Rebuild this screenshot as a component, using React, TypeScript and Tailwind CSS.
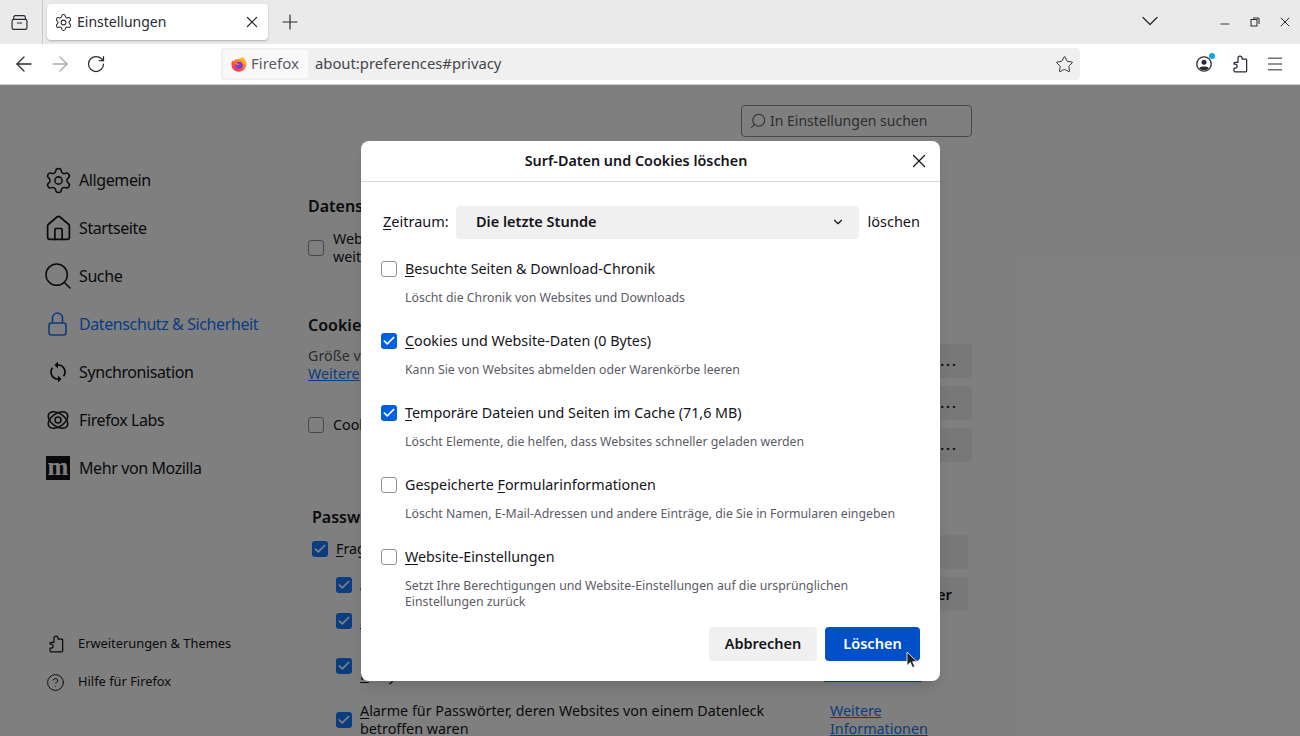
import React from 'react';
import { Settings, X, Plus, ArrowLeft, ArrowRight, RotateCw, Star, Menu, ChevronDown, Search, House, CircleHelp, Check, Minus } from 'lucide-react';

function Puzzle({ className }: { className?: string }) {
  return (
    <svg viewBox="0 0 16 16" fill="none" stroke="currentColor" strokeWidth="1.1" strokeLinejoin="round" className={className}>
      <path d="M6.200 3.600V2.800a1.800 1.800 0 0 1 3.600 0v.8h3.400a.7.7 0 0 1 .7.7v10a.7.7 0 0 1-.7.7H3.400a.7.7 0 0 1-.7-.7v-2.700h1a1.700 1.700 0 0 0 0-3.400h-1V7.300a.7.7 0 0 1 .7-.7h2.800z" />
    </svg>
  );
}

function FirefoxLogo() {
  return (
    <svg viewBox="0 0 16 16" className="h-4 w-4 shrink-0">
      <defs>
        <linearGradient id="fx" x1="0.8" y1="0.1" x2="0.2" y2="0.9">
          <stop offset="0" stopColor="#ffcb2e" />
          <stop offset="0.5" stopColor="#ff6a2b" />
          <stop offset="1" stopColor="#f5306b" />
        </linearGradient>
      </defs>
      <path d="M11.600.6c.3 1.400 2.900 2.600 3.600 5.200C16.300 10.600 13 15.700 8 15.700 3.700 15.700.4 12.400.4 8.200c0-1.500.4-3 1.200-4.100 0 .7.300 1.300.7 1.600C3 4.100 4.500 3.500 5.800 3.200 8.500 2.600 10.800 2.300 11.600.6z" fill="url(#fx)" />
      <circle cx="8.200" cy="9.300" r="3.600" fill="#7a3bd6" />
      <path d="M4.200 7.500c1 1.800 3.600 1.600 4.800.6-1.300-.4-2.300-.2-3.400-.9C5 6.700 4.700 6.800 4.200 7.500z" fill="#ff9a2b" />
    </svg>
  );
}

function Box({ on, page }: { on?: boolean; page?: boolean }) {
  if (on) {
    return (
      <span className={`flex h-4 w-4 shrink-0 items-center justify-center rounded-[3px] ${page ? 'bg-[#147aff]' : 'bg-[#0061e0]'}`}>
        <Check className="h-3.5 w-3.5 text-white" strokeWidth={3} />
      </span>
    );
  }
  return <span className="block h-4 w-4 shrink-0 rounded-[3px] border border-[#8f8f9d] bg-white" />;
}

function Key({ children }: { children: React.ReactNode }) {
  return <span className="underline decoration-1 underline-offset-2">{children}</span>;
}

function NavItem({ icon, label, active }: { icon: React.ReactNode; label: string; active?: boolean }) {
  return (
    <div className={`flex h-12 items-center ${active ? 'text-[#147aff]' : 'text-[#15141a]'}`}>
      <span className="flex w-[33px] shrink-0 items-center">{icon}</span>
      <span className="text-[16px] tracking-[-0.4px]">{label}</span>
    </div>
  );
}

function SmallNav({ icon, label }: { icon: React.ReactNode; label: string }) {
  return (
    <div className="flex h-[38px] items-center text-[#15141a]">
      <span className="flex w-[32px] shrink-0 items-center">{icon}</span>
      <span className="text-[12.85px]">{label}</span>
    </div>
  );
}

function Option({ k, label, rest, desc, on, className }: { k: string; label?: string; rest: string; desc: React.ReactNode; on?: boolean; className?: string }) {
  return (
    <div className={`flex flex-col ${className ?? 'h-[72px]'}`}>
      <div className="flex h-6 items-center gap-2 text-[14.3px] text-[#15141a]">
        <Box on={on} />
        <span>{label}<Key>{k}</Key>{rest}</span>
      </div>
      <p className="mt-[9px] pl-6 text-[12.3px] leading-4 text-[#5b5b66]">{desc}</p>
    </div>
  );
}

function Dialog() {
  return (
    <div className="absolute left-[361px] top-[56px] flex h-[540px] w-[579px] flex-col overflow-hidden rounded-lg bg-white shadow-lg">
      <div className="flex h-[41px] shrink-0 items-center border-b border-[#d7d7db] pr-[10px]">
        <span className="flex-1 pl-[3px] text-center text-[14.35px] font-semibold text-[#15141a]">Surf-Daten und Cookies löschen</span>
        <X className="h-[22px] w-[22px] shrink-0 text-[#15141a]" strokeWidth={1.4} />
      </div>
      <div className="flex flex-1 flex-col px-5">
        <div className="mt-[23px] flex h-[34px] items-center text-[14.5px] text-[#15141a]">
          <span className="ml-[2px] w-[73px] shrink-0"><Key>Z</Key>eitraum:</span>
          <div className="flex h-[33px] w-[404px] items-center justify-between rounded bg-[#f0f0f0] pl-5 pr-[14px] font-semibold">
            <span>Die letzte Stunde</span>
            <ChevronDown className="h-3.5 w-3.5" strokeWidth={2} />
          </div>
          <span className="ml-2">löschen</span>
        </div>
        <div className="mt-[18px] flex flex-col">
          <Option k="B" rest="esuchte Seiten & Download-Chronik" desc="Löscht die Chronik von Websites und Downloads" />
          <Option on k="C" rest="ookies und Website-Daten (0 Bytes)" desc="Kann Sie von Websites abmelden oder Warenkörbe leeren" />
          <Option on k="T" rest="emporäre Dateien und Seiten im Cache (71,6 MB)" desc="Löscht Elemente, die helfen, dass Websites schneller geladen werden" />
          <Option label="Gespeicherte " k="F" rest="ormularinformationen" desc="Löscht Namen, E-Mail-Adressen und andere Einträge, die Sie in Formularen eingeben" />
          <Option k="W" rest="ebsite-Einstellungen" className="h-[68px]" desc={<>Setzt Ihre Berechtigungen und Website-Einstellungen auf die ursprünglichen<br />Einstellungen zurück</>} />
        </div>
        <div className="mt-[14px] flex justify-end gap-2 text-[14.5px] font-semibold">
          <button className="h-[34px] w-[108px] rounded bg-[#f0f0f0] text-[#15141a]">Abbrechen</button>
          <button className="h-[34px] w-[95px] rounded bg-[#0250c8] text-white">Löschen</button>
        </div>
      </div>
    </div>
  );
}

function GhostBtn({ children, className }: { children?: React.ReactNode; className?: string }) {
  return <div className={`flex h-[34px] w-[40px] items-center justify-end rounded bg-[#f0f0f0] font-semibold ${className ?? ''}`}>{children}</div>;
}

export default function App() {
  return (
    <div className="relative flex h-[736px] w-[1300px] flex-col overflow-hidden bg-white font-['Noto_Sans',sans-serif]">
      {/* Tabs */}
      <div className="flex h-11 shrink-0 items-center bg-[#eaeaea] text-[#2b2a33]">
        <div className="flex h-full w-[43px] shrink-0 items-center justify-center border-r border-[#c9c9c9] pr-[4px]">
          <svg viewBox="0 0 16 16" fill="none" stroke="currentColor" strokeWidth="1.1" className="h-[17px] w-[17px]">
            <path d="M2.500 5V3.200a1.600 1.600 0 0 1 1.600-1.600h7.800a1.600 1.600 0 0 1 1.600 1.600V5" />
            <rect x="1" y="5" width="14" height="9.500" rx="1.500" />
            <path d="M6 8.500h4" strokeLinecap="round" />
          </svg>
        </div>
        <div className="ml-[4px] flex h-9 w-[221px] items-center rounded bg-white pl-[6.5px] pr-[7px] shadow-[0_1px_2px_rgba(0,0,0,0.25)]">
          <Settings className="h-[19px] w-[19px] shrink-0" strokeWidth={1.3} />
          <span className="ml-[4.5px] flex-1 pb-[2px] text-[14px]">Einstellungen</span>
          <X className="h-[18px] w-[18px]" strokeWidth={1.6} />
        </div>
        <Plus className="ml-[10px] h-6 w-6" strokeWidth={1.2} />
        <ChevronDown className="ml-auto -mt-[2px] h-7 w-7" strokeWidth={1.1} />
        <Minus className="ml-[54px] mt-1 h-3.5 w-3.5" strokeWidth={1.6} />
        <svg viewBox="0 0 10 10" fill="none" stroke="currentColor" strokeWidth="1" className="ml-[18px] h-[10px] w-[10px]">
          <rect x="1" y="2.500" width="6" height="6.500" />
          <path d="M3 1h6v6" />
        </svg>
        <X className="ml-[17px] mr-[7px] h-4 w-4" strokeWidth={1.5} />
      </div>

      {/* Toolbar */}
      <div className="flex h-[41px] shrink-0 items-center border-b border-[#d0d0d0] bg-white text-[#2b2a33]">
        <ArrowLeft className="ml-3 h-6 w-6" strokeWidth={1.3} />
        <ArrowRight className="ml-3 h-6 w-6 text-[#a9a9ad]" strokeWidth={1.3} />
        <RotateCw className="ml-[14px] h-5 w-5" strokeWidth={1.5} />
        <div className="ml-[115px] flex h-8 w-[859px] items-center rounded bg-[#f0f0f0] pl-[2px] pr-[6px]">
          <div className="flex h-7 w-[85px] items-center gap-1 rounded bg-[#f9f9f9] pl-2 text-[15px] text-[#5b5b66]">
            <FirefoxLogo />
            <span className="pb-[2px]">Firefox</span>
          </div>
          <span className="ml-[7px] flex-1 pb-[2px] text-[14.8px] text-[#45454d]">about:preferences#privacy</span>
          <Star className="h-[19px] w-[19px]" strokeWidth={1.2} />
        </div>
        <div className="relative ml-[116px] h-4 w-4">
          <svg viewBox="0 0 16 16" className="h-4 w-4" fill="none" stroke="currentColor" strokeWidth="1.3">
            <circle cx="8" cy="8" r="7.200" />
            <circle cx="8" cy="6.300" r="2.500" fill="currentColor" stroke="none" />
            <path d="M3.500 11.500c1-1.500 8-1.500 9 0v1l-2 1.500h-5l-2-1.500z" fill="currentColor" stroke="none" />
          </svg>
          <span className="absolute -right-[3px] -top-[3px] h-[6px] w-[6px] rounded-full bg-[#0ea5ef]" />
        </div>
        <Puzzle className="ml-[19px] h-[18px] w-[18px]" />
        <Menu className="ml-[16px] h-5 w-5" strokeWidth={1.2} />
      </div>

      {/* Page */}
      <div className="relative flex min-h-0 flex-1 bg-white">
        <aside className="flex w-[308px] shrink-0 flex-col pl-[46px] pt-[71px]">
          <NavItem icon={<Settings className="-ml-[2.5px] h-[29px] w-[29px]" strokeWidth={1.25} />} label="Allgemein" />
          <NavItem icon={<House className="-ml-[2.5px] h-[29px] w-[29px]" strokeWidth={1.4} />} label="Startseite" />
          <NavItem icon={<Search className="-ml-[4px] h-8 w-8" strokeWidth={1.15} />} label="Suche" />
          <NavItem
            active
            icon={
              <svg viewBox="0 0 19 24" fill="none" stroke="currentColor" strokeWidth="1.6" className="ml-[2px] h-6 w-[19px]">
                <rect x="1" y="11" width="17" height="12" rx="2.500" />
                <path d="M4.500 11V6a5 5 0 0 1 10 0v5" />
              </svg>
            }
            label="Datenschutz & Sicherheit"
          />
          <NavItem
            icon={
              <svg viewBox="0 0 24 24" fill="none" stroke="currentColor" strokeWidth="1.7" className="h-6 w-6">
                <path d="M12 5a7 7 0 0 1 5.500 11.300M12 19a7 7 0 0 1-5.500-11.300" />
                <path d="M12 1.500v7l-3.500-3.500zM12 22.500v-7l3.500 3.500z" fill="currentColor" stroke="none" />
              </svg>
            }
            label="Synchronisation"
          />
          <NavItem
            icon={
              <svg viewBox="0 0 24 24" fill="none" stroke="currentColor" strokeWidth="1.5" className="h-6 w-6">
                <ellipse cx="12" cy="12" rx="11" ry="6.500" transform="rotate(35 12 12)" />
                <ellipse cx="12" cy="12" rx="11" ry="6.500" transform="rotate(-35 12 12)" />
                <circle cx="12" cy="12" r="3" />
              </svg>
            }
            label="Firefox Labs"
          />
          <NavItem
            icon={
              <span className="flex h-6 w-6 items-center justify-center bg-[#15141a] pb-[2px] font-['Liberation_Serif',serif] text-[25px] font-bold leading-5 text-white">m</span>
            }
            label="Mehr von Mozilla"
          />
          <div className="mt-[133px] flex flex-col">
            <SmallNav icon={<Puzzle className="ml-[1px] h-[18px] w-[18px]" />} label="Erweiterungen & Themes" />
            <SmallNav icon={<CircleHelp className="h-[19px] w-[19px]" strokeWidth={1.2} />} label="Hilfe für Firefox" />
          </div>
        </aside>

        <main className="flex min-w-0 flex-1 flex-col overflow-hidden text-[14.3px] leading-[18px] text-[#15141a]">
          <div className="mt-5 ml-[433px] flex h-8 w-[231px] shrink-0 items-center gap-[3px] rounded border border-[#8f8f9d] pl-[7px] text-[14px] text-[#5b5b66]">
            <Search className="h-[18px] w-[18px] -scale-x-100" strokeWidth={1.4} />
            <span>In Einstellungen suchen</span>
          </div>

          <h2 className="mt-[57px] text-[16px] font-semibold leading-6">Datenschutz</h2>
          <div className="mt-[12px] flex items-center gap-[9px]">
            <Box />
            <p>Website<br />weiter</p>
          </div>

          <h2 className="mt-[47px] text-[16px] font-semibold leading-6">Cookies</h2>
          <div className="flex justify-between pr-[328px]">
            <div className="flex flex-col pt-[10px]">
              <p className="text-[#5b5b66]">Größe von<br /><span className="text-[#147aff] underline">Weitere</span></p>
              <div className="mt-[33px] flex items-center gap-[9px]"><Box /><span>Cookies</span></div>
            </div>
            <div className="flex flex-col gap-2 pt-[7px]">
              <GhostBtn className="pr-[14px] tracking-[2px]">...</GhostBtn>
              <GhostBtn className="pr-[14px] tracking-[2px]">...</GhostBtn>
              <GhostBtn className="pr-[14px] tracking-[2px]">...</GhostBtn>
            </div>
          </div>

          <div className="mt-[43px] flex justify-between pl-1 pr-[332px]">
            <div className="flex w-[616px] flex-col">
              <h2 className="text-[16px] font-semibold leading-6">Passwörter</h2>
              <div className="mt-[11px] flex items-center gap-2"><Box on page /><span><Key>F</Key>ragen</span></div>
              <div className="mt-[18px] flex items-center gap-2 pl-6"><Box on page /><span>Anmelde</span></div>
              <div className="mt-[18px] flex items-center gap-2 pl-6"><Box on page /><span><Key>S</Key>tarke</span></div>
              <div className="mt-[18px] flex items-center gap-2 pl-6">
                <Box on page />
                <p className="w-[456px]">Firefox<br /><Key>R</Key>elay</p>
                <p className="text-[#147aff] underline">Weitere<br />Informationen</p>
              </div>
              <div className="mt-[18px] flex items-center gap-2 pl-6">
                <Box on page />
                <p className="w-[462px]"><Key>A</Key>larme für Passwörter, deren Websites von einem Datenleck betroffen waren</p>
                <p className="text-[#147aff] underline">Weitere<br />Informationen</p>
              </div>
            </div>
            <div className="flex flex-col gap-2 pt-[30px]">
              <GhostBtn />
              <GhostBtn className="pr-4 text-[15px]">er</GhostBtn>
            </div>
          </div>
        </main>

        {/* dims the page behind the dialog */}
        <div className="absolute inset-0 bg-black/50" />
        <Dialog />
        <svg viewBox="0 0 12 18" className="absolute left-[906px] top-[566px] h-[18px] w-[12px]">
          <path d="M1 1v13.500l3.300-3 2.200 5 2.300-1-2.200-4.800h4.400z" fill="#222" stroke="#fff" strokeWidth="0.8" />
        </svg>
      </div>
    </div>
  );
}
